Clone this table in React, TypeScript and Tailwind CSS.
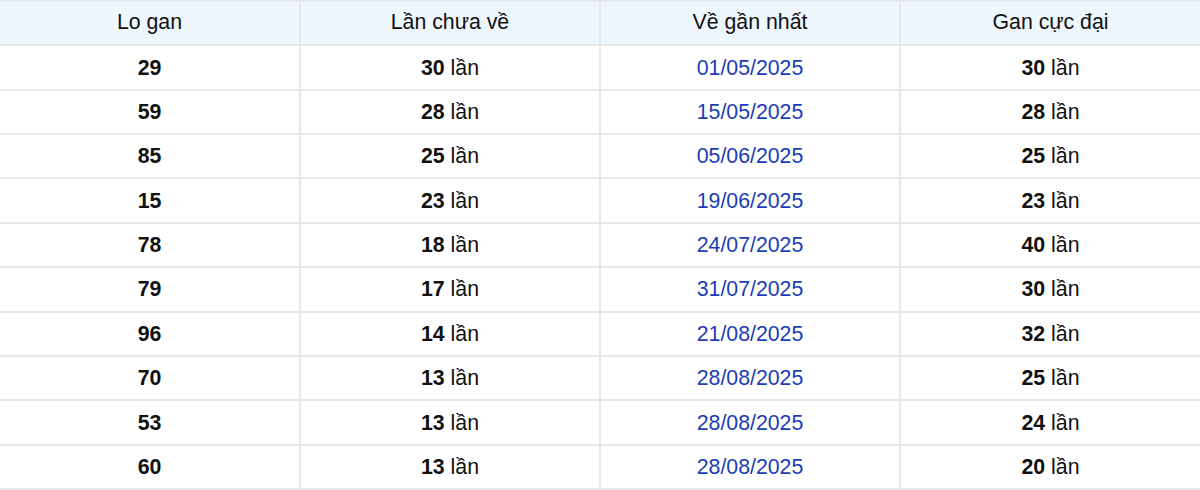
const rows: [string, string, string, string][] = [
  ['29', '30', '01/05/2025', '30'],
  ['59', '28', '15/05/2025', '28'],
  ['85', '25', '05/06/2025', '25'],
  ['15', '23', '19/06/2025', '23'],
  ['78', '18', '24/07/2025', '40'],
  ['79', '17', '31/07/2025', '30'],
  ['96', '14', '21/08/2025', '32'],
  ['70', '13', '28/08/2025', '25'],
  ['53', '13', '28/08/2025', '24'],
  ['60', '13', '28/08/2025', '20'],
];

const headers = ['Lo gan', 'Lần chưa về', 'Về gần nhất', 'Gan cực đại'];

function Count({ n }: { n: string }) {
  return (
    <>
      <b className="font-bold">{n}</b> lần
    </>
  );
}

export default function App() {
  return (
    <div className="w-[1200px] bg-white font-['Liberation_Sans',Arial,sans-serif] text-[21.3px] text-[#111]">
      <table className="w-full table-fixed border-collapse text-center">
        <thead>
          <tr className="h-[44.3px] bg-[#eef6fe]">
            {headers.map((h) => (
              <th
                key={h}
                className="border-2 border-l-0 border-[#e6e8eb] font-normal last:border-r-0"
              >
                {h}
              </th>
            ))}
          </tr>
        </thead>
        <tbody>
          {rows.map(([lo, miss, date, max], i) => (
            <tr key={i} className="h-[44.4px]">
              <td className="border-2 border-l-0 border-[#e6e8eb] pt-0.5 font-bold">{lo}</td>
              <td className="border-2 border-[#e6e8eb] pt-0.5">
                <Count n={miss} />
              </td>
              <td className="border-2 border-[#e6e8eb] pt-0.5 text-[#1a3db5]">{date}</td>
              <td className="border-2 border-r-0 border-[#e6e8eb] pt-0.5">
                <Count n={max} />
              </td>
            </tr>
          ))}
        </tbody>
      </table>
    </div>
  );
}
